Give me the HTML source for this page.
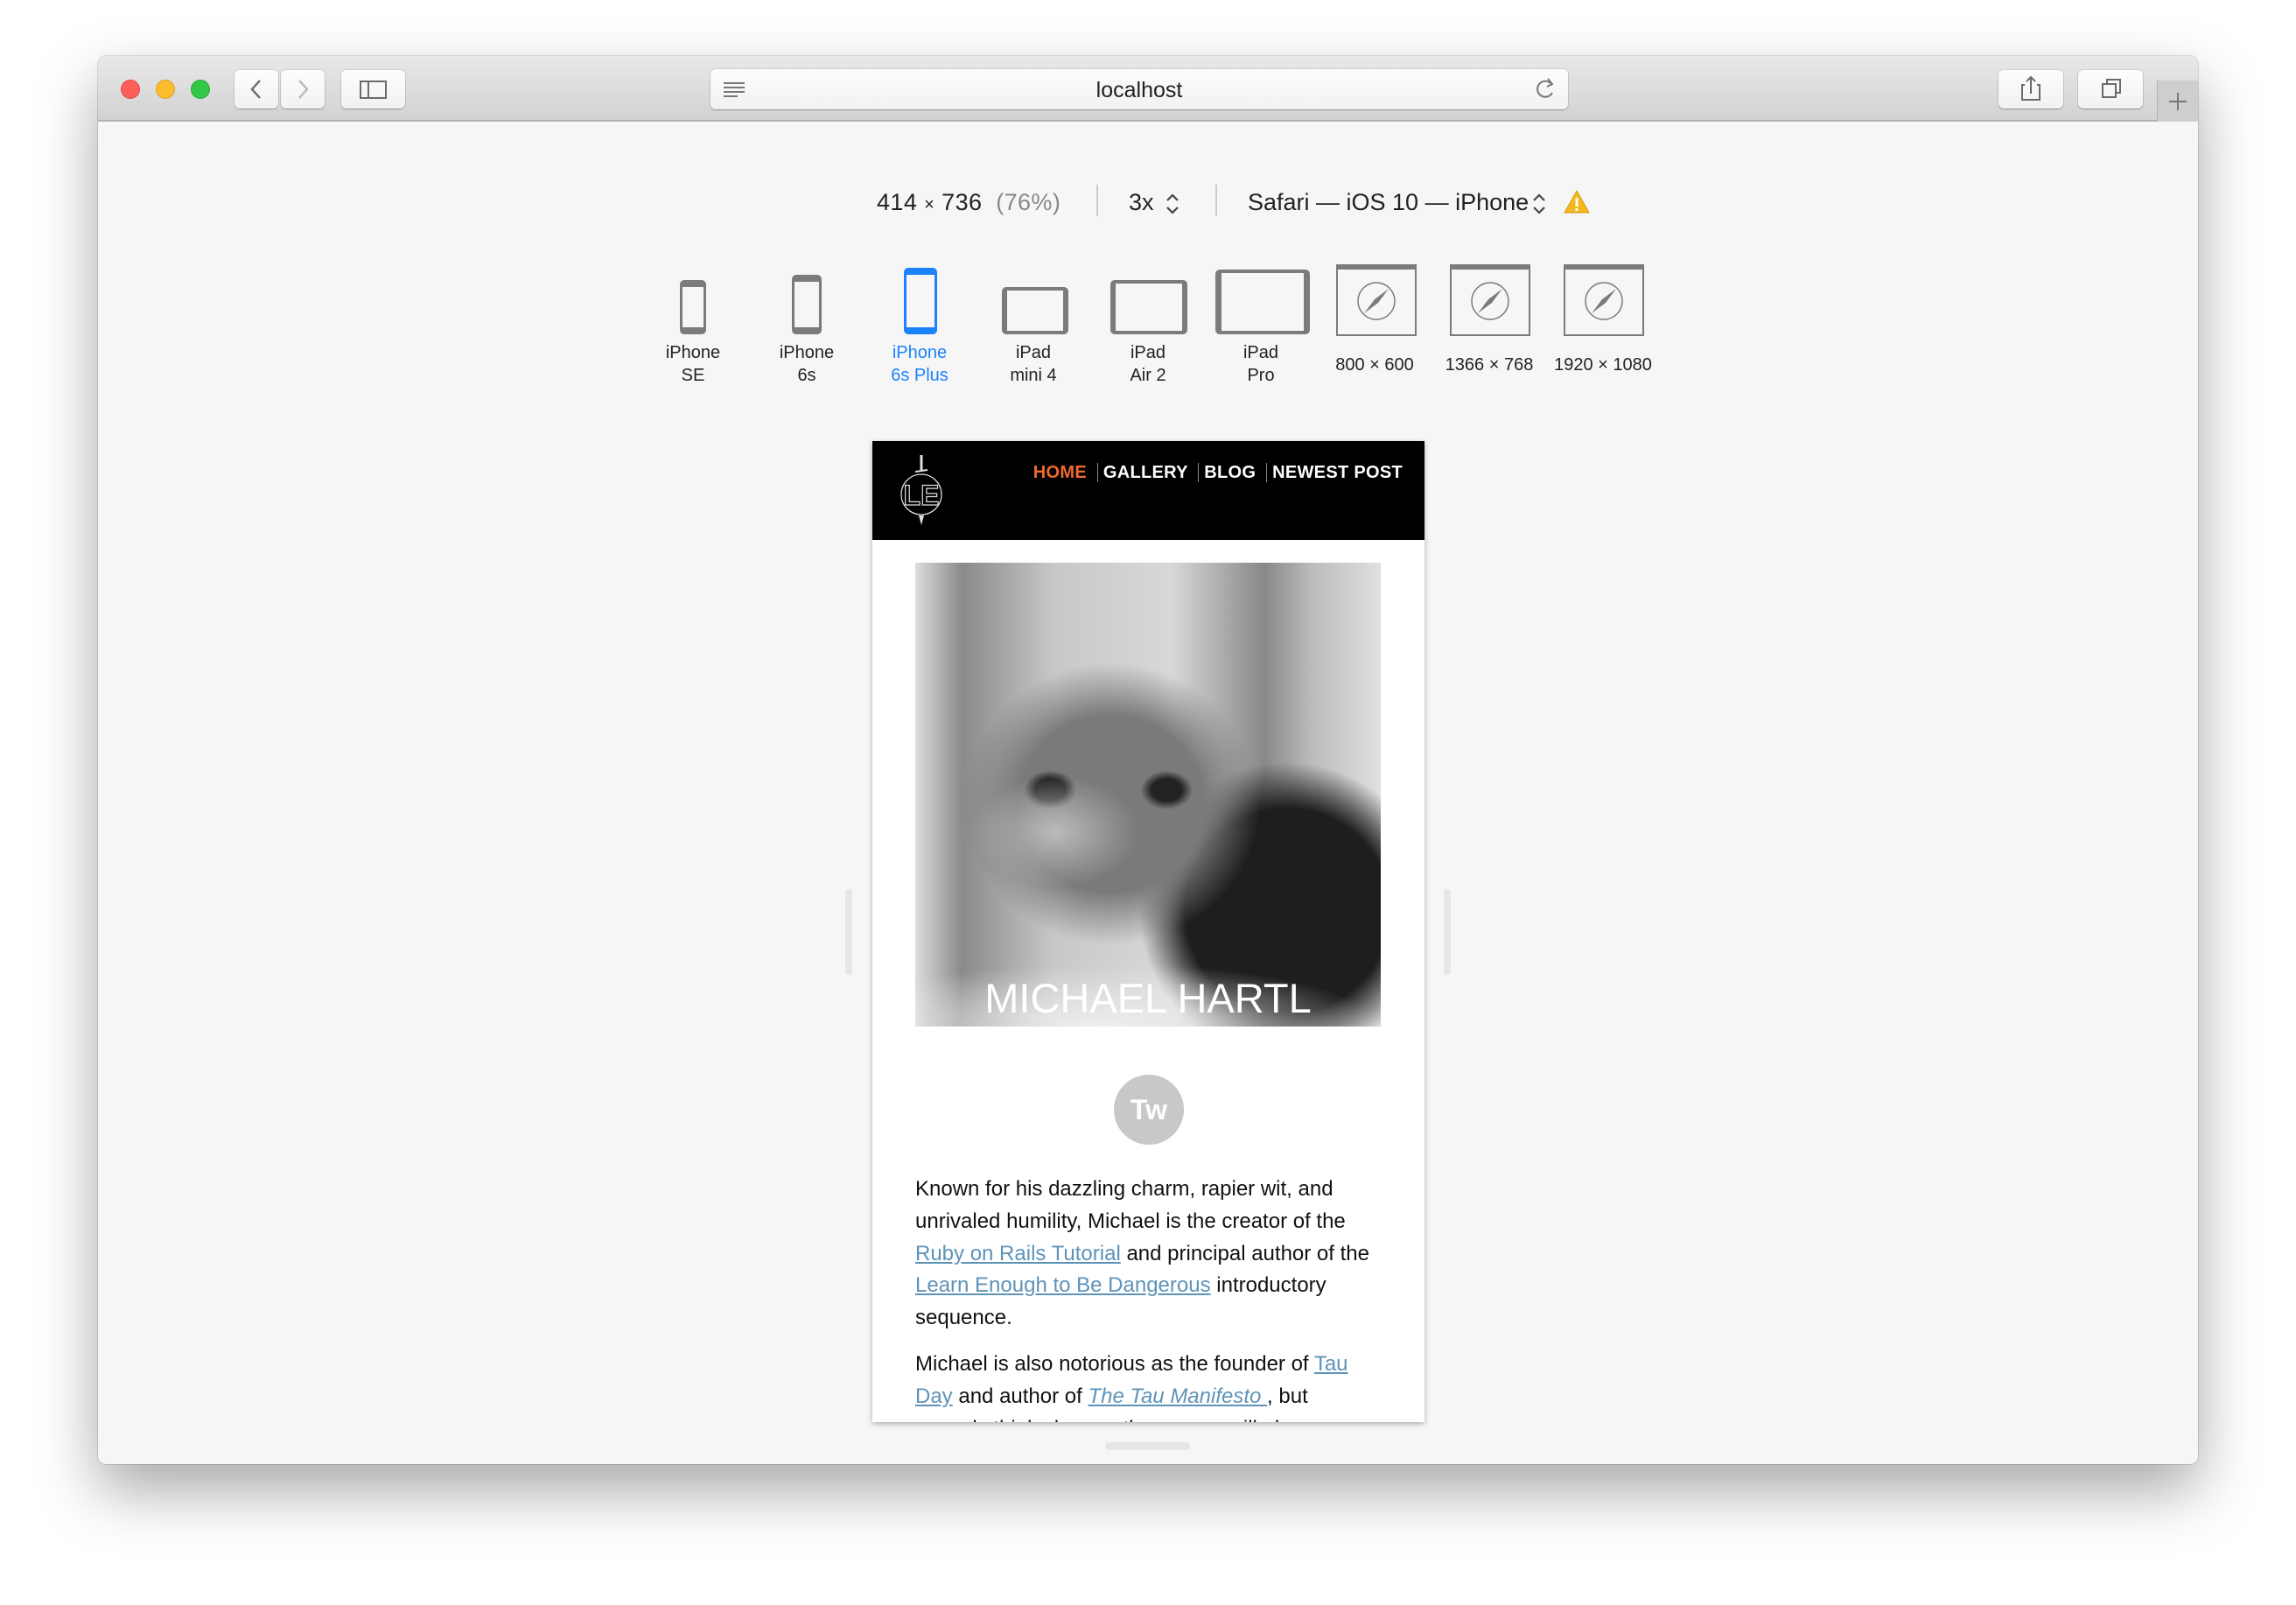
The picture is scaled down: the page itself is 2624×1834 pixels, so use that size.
<!DOCTYPE html>
<html><head><meta charset="utf-8"><style>
*{margin:0;padding:0;box-sizing:border-box}
body{width:2624px;height:1834px;background:#fff;position:relative;overflow:hidden;font-family:"Liberation Sans",sans-serif}
.win{position:absolute;left:112px;top:64px;width:2400px;height:1609px;background:#f6f6f6;border-radius:9px;box-shadow:0 30px 70px rgba(0,0,0,.35),0 0 0 1px rgba(0,0,0,.12);overflow:hidden}
.tb{position:absolute;left:0;top:0;width:100%;height:75px;background:linear-gradient(#e9e8e9,#d3d2d3);border-bottom:2px solid #b3b2b3}
.dot{position:absolute;top:27px;width:22px;height:22px;border-radius:50%}
.btn{position:absolute;top:16px;height:44px;background:linear-gradient(#fdfdfd,#f1f1f1);border-radius:6px;box-shadow:0 1px 1px rgba(0,0,0,.25),0 0 0 1px rgba(0,0,0,.08)}
.abs{position:absolute}
.lbl{position:absolute;font-size:20px;color:#222;text-align:center;line-height:26px;width:130px}
.dev{position:absolute;background:#7b7b7b;border-radius:5px}
.dev i{position:absolute;background:#f6f6f6}
</style></head><body>
<div class="win">
 <div class="tb">
  <div class="dot" style="left:26px;background:#fc5f57;border:1px solid #df4a42"></div>
  <div class="dot" style="left:66px;background:#fdbc2e;border:1px solid #de9f27"></div>
  <div class="dot" style="left:106px;background:#33c748;border:1px solid #27aa35"></div>
  <div class="btn" style="left:156px;width:50px"><svg width="50" height="44"><path d="M29 12 L20 22 L29 32" fill="none" stroke="#6b6b6b" stroke-width="2.4"/></svg></div>
  <div class="btn" style="left:209px;width:50px"><svg width="50" height="44"><path d="M21 12 L30 22 L21 32" fill="none" stroke="#b8b8b8" stroke-width="2.4"/></svg></div>
  <div class="btn" style="left:278px;width:73px"><svg width="73" height="44"><rect x="22" y="13" width="29" height="19" fill="none" stroke="#6b6b6b" stroke-width="2"/><line x1="31" y1="13" x2="31" y2="32" stroke="#6b6b6b" stroke-width="2"/></svg></div>
  <div class="btn" style="left:700px;width:980px;top:15px;height:46px"><svg width="40" height="46" style="position:absolute;left:12px;top:0"><path d="M3 16h24M3 21h24M3 26h24M3 31h16" stroke="#777" stroke-width="2"/></svg>
   <div class="abs" style="left:0;width:100%;text-align:center;top:10px;font-size:25px;color:#222">localhost</div>
   <svg width="30" height="46" style="position:absolute;right:10px;top:0"><path d="M21 17 A9 9 0 1 0 22 27" fill="none" stroke="#777" stroke-width="2"/><path d="M17 11 L22 17 L16 20" fill="none" stroke="#777" stroke-width="2"/></svg></div>
  <div class="btn" style="left:2172px;width:74px"><svg width="74" height="44"><path d="M30 17h-3v17h20V17h-3M37 27V8M32 13l5-5 5 5" fill="none" stroke="#6b6b6b" stroke-width="2"/></svg></div>
  <div class="btn" style="left:2263px;width:74px"><svg width="74" height="44"><rect x="28" y="16" width="15" height="15" fill="none" stroke="#6b6b6b" stroke-width="2"/><path d="M33 16v-5h15v15h-5" fill="none" stroke="#6b6b6b" stroke-width="2"/></svg></div>
  <div class="abs" style="left:2353px;top:28px;width:47px;height:47px;background:#cfcece;border-left:1px solid #b3b2b3"><svg width="47" height="47"><path d="M23 14v20M13 24h20" stroke="#777" stroke-width="2"/></svg></div>
 </div>

 <div class="abs" style="top:152px;left:890px;font-size:27px;color:#222;white-space:nowrap;letter-spacing:.4px">414 <span style="font-size:20px">×</span> 736 &nbsp;<span style="color:#888">(76%)</span></div>
 <div class="abs" style="left:1141px;top:147px;width:2px;height:36px;background:#ccc"></div>
 <div class="abs" style="top:152px;left:1178px;font-size:27px;color:#222">3x</div>
 <svg class="abs" style="left:1218px;top:154px" width="20" height="30"><path d="M4 11l6-6 6 6M4 19l6 6 6-6" fill="none" stroke="#444" stroke-width="2.2"/></svg>
 <div class="abs" style="left:1277px;top:147px;width:2px;height:36px;background:#ccc"></div>
 <div class="abs" style="top:152px;left:1314px;font-size:27px;color:#222;white-space:nowrap">Safari — iOS 10 — iPhone</div>
 <svg class="abs" style="left:1637px;top:154px" width="20" height="30"><path d="M4 11l6-6 6 6M4 19l6 6 6-6" fill="none" stroke="#444" stroke-width="2.2"/></svg>
 <svg class="abs" style="left:1674px;top:152px" width="32" height="30"><path d="M16 2 L30 27 H2 Z" fill="#f2b81c" stroke="#d89a10" stroke-width="1"/><rect x="14.5" y="10" width="3" height="10" fill="#fff"/><rect x="14.5" y="22" width="3" height="3" fill="#fff"/></svg>

 <div class="dev" style="left:665px;top:256px;width:30px;height:62px"><i style="left:3px;right:3px;top:8px;bottom:8px"></i></div>
 <div class="dev" style="left:793px;top:250px;width:34px;height:68px"><i style="left:3px;right:3px;top:8px;bottom:8px"></i></div>
 <div class="dev" style="left:921px;top:242px;width:38px;height:76px;background:#1a82fb"><i style="left:3px;right:3px;top:8px;bottom:8px"></i></div>
 <div class="dev" style="left:1033px;top:264px;width:76px;height:54px"><i style="left:6px;right:6px;top:4px;bottom:4px"></i></div>
 <div class="dev" style="left:1157px;top:256px;width:88px;height:62px"><i style="left:6px;right:6px;top:4px;bottom:4px"></i></div>
 <div class="dev" style="left:1277px;top:244px;width:108px;height:74px"><i style="left:7px;right:7px;top:4px;bottom:4px"></i></div>
 <svg class="abs" style="left:1415px;top:238px" width="92" height="82"><g id="b"><rect x="1" y="1" width="90" height="80" fill="#f6f6f6" stroke="#7b7b7b" stroke-width="2"/><rect x="1" y="1" width="90" height="5" fill="#7b7b7b"/><circle cx="46" cy="42" r="21" fill="none" stroke="#7b7b7b" stroke-width="1.5"/><path d="M60 28 L44 40 L32 56 L48 44 Z" fill="#7b7b7b"/></g></svg>
 <svg class="abs" style="left:1545px;top:238px" width="92" height="82"><use href="#b"/></svg>
 <svg class="abs" style="left:1675px;top:238px" width="92" height="82"><use href="#b"/></svg>

 <div class="lbl" style="left:615px;top:326px">iPhone<br>SE</div>
 <div class="lbl" style="left:745px;top:326px">iPhone<br>6s</div>
 <div class="lbl" style="left:874px;top:326px;color:#1a82fb">iPhone<br>6s Plus</div>
 <div class="lbl" style="left:1004px;top:326px">iPad<br>mini 4</div>
 <div class="lbl" style="left:1135px;top:326px">iPad<br>Air 2</div>
 <div class="lbl" style="left:1264px;top:326px">iPad<br>Pro</div>
 <div class="lbl" style="left:1394px;top:340px">800 × 600</div>
 <div class="lbl" style="left:1525px;top:340px">1366 × 768</div>
 <div class="lbl" style="left:1655px;top:340px">1920 × 1080</div>

 <div class="abs" style="left:854px;top:952px;width:8px;height:98px;background:#e6e6e6;border-radius:4px"></div>
 <div class="abs" style="left:1538px;top:952px;width:8px;height:98px;background:#e6e6e6;border-radius:4px"></div>
 <div class="abs" style="left:1151px;top:1584px;width:97px;height:9px;background:#e6e6e6;border-radius:4px"></div>

 <div class="abs" style="left:885px;top:440px;width:631px;height:1121px;background:#fff;box-shadow:0 2px 6px rgba(0,0,0,.3);overflow:hidden">
  <div class="abs" style="left:0;top:0;width:631px;height:113px;background:#000">
   <svg class="abs" style="left:16px;top:14px" width="80" height="82"><line x1="40" y1="2" x2="40" y2="20" stroke="#ddd" stroke-width="3"/><line x1="33" y1="21" x2="47" y2="19" stroke="#ddd" stroke-width="2"/><circle cx="40" cy="47" r="23" fill="none" stroke="#ddd" stroke-width="1.3"/><text x="40" y="59" text-anchor="middle" font-family="Liberation Sans Narrow, Liberation Sans" font-size="32" font-weight="bold" fill="none" stroke="#ddd" stroke-width="1.2">LE</text><path d="M37 71 L40 82 L43 71 Z" fill="#ddd"/></svg>
   <div class="abs" style="top:25px;right:25px;font-size:20px;font-weight:bold;color:#fff;white-space:nowrap;letter-spacing:.3px"><span style="color:#f0692d">HOME</span> <span style="border-left:1px solid #888;padding-left:6px;margin-left:6px">GALLERY</span> <span style="border-left:1px solid #888;padding-left:6px;margin-left:6px">BLOG</span> <span style="border-left:1px solid #888;padding-left:6px;margin-left:6px">NEWEST POST</span></div>
  </div>
  <div class="abs" style="left:49px;top:139px;width:532px;height:530px;overflow:hidden;background:
   radial-gradient(ellipse 18% 12% at 30% 58%, #bbb, transparent),
   radial-gradient(ellipse 8% 6% at 29% 49%, #222 40%, transparent 70%),
   radial-gradient(ellipse 8% 6% at 54% 49%, #222 40%, transparent 70%),
   radial-gradient(ellipse 40% 38% at 42% 52%, #7a7a7a 50%, transparent 80%),
   radial-gradient(ellipse 40% 40% at 80% 75%, #1e1e1e 55%, transparent 80%),
   linear-gradient(90deg,#ddd 0%,#8a8a8a 10%,#c8c8c8 30%,#d8d8d8 55%,#888 75%,#bbb 85%,#e0e0e0 100%)">
   <div class="abs" style="left:0;top:440px;width:100%;height:90px;background:radial-gradient(ellipse 60% 80% at 40% 100%,#eee,transparent)"></div>
   <div class="abs" style="left:0;width:100%;top:470px;text-align:center;font-size:47px;color:#fff;white-space:nowrap">MICHAEL HARTL</div>
  </div>
  <div class="abs" style="left:276px;top:724px;width:80px;height:80px;border-radius:50%;background:#c8c8c8;color:#fff;font-weight:bold;font-size:32px;text-align:center;line-height:80px">Tw</div>
  <div class="abs" style="left:49px;top:837px;width:560px;font-size:24px;line-height:36.8px;color:#111;white-space:nowrap">
   Known for his dazzling charm, rapier wit, and<br>unrivaled humility, Michael is the creator of the<br><u style="color:#5e93b8">Ruby on Rails Tutorial</u> and principal author of the<br><u style="color:#5e93b8">Learn Enough to Be Dangerous</u> introductory<br>sequence.
   <div style="height:16px"></div>
   Michael is also notorious as the founder of <u style="color:#5e93b8">Tau</u><br><u style="color:#5e93b8">Day</u> and author of <u style="color:#5e93b8"><i>The Tau Manifesto</i> </u>, but<br>wrongly thinks he can the energy will also
  </div>
 </div>
</div>
</body></html>
